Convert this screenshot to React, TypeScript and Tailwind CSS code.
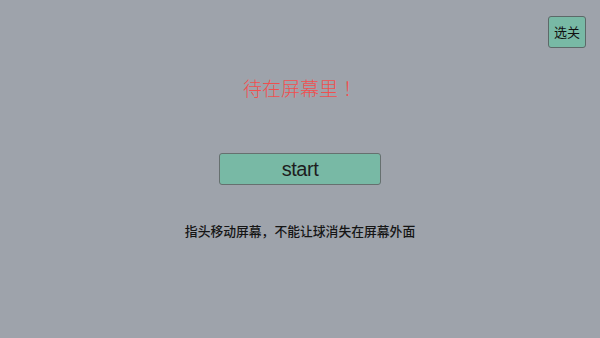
export default function App() {
  return (
    <main className="w-[600px] h-[338px] bg-[#9ea3ab] flex flex-col items-center pt-4 font-['Noto_Sans_CJK_SC','Liberation_Sans',sans-serif] overflow-hidden">
      <div className="w-full flex justify-end pr-[14px]">
        <button className="w-[38px] h-[32px] bg-[#78b9a5] border border-[#5c6968] rounded-[3px] text-[13px] text-[#111] flex items-center justify-center">
          选关
        </button>
      </div>
      <h1 className="mt-[26px] text-[19px] leading-[28px] text-[#f04f4f] font-light">
        待在屏幕里<span className="font-['Noto_Sans_CJK_TC',sans-serif]">！</span>
      </h1>
      <button className="mt-[51px] w-[162px] h-[32px] bg-[#78b9a5] border border-[#66706f] rounded-[3px] text-[20px] tracking-[-0.5px] text-[#1e1e1e] font-['Liberation_Sans',sans-serif] flex items-center justify-center">
        start
      </button>
      <p className="mt-[37px] text-[12.8px] leading-[18px] text-[#151515] font-medium">指头移动屏幕，不能让球消失在屏幕外面</p>
    </main>
  )
}
